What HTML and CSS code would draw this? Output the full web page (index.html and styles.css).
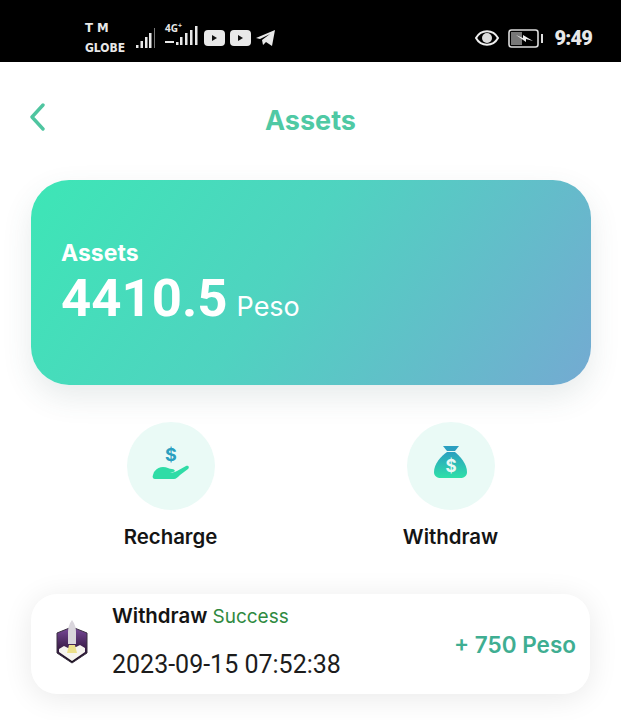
FILE: index.html
```html
<!DOCTYPE html>
<html lang="en">
<head>
  <meta charset="UTF-8">
  <meta name="viewport" content="width=device-width, initial-scale=1.0">
  <title>Assets</title>
  <link rel="stylesheet" href="styles.css">
</head>
<body>
  <div class="status-bar">
    <div class="status-left">
      <div class="carrier"><span class="carrier-top">T M</span><span>GLOBE</span></div>
      <svg class="signal-one" width="22" height="20" viewBox="0 0 22 20" fill="#e8e8e8">
        <rect x="0" y="17" width="2.5" height="3"/><rect x="4.5" y="13" width="2.5" height="7"/><rect x="9" y="9" width="2.5" height="11"/><rect x="13" y="5" width="2.5" height="15"/><rect x="18" y="0" width="1" height="20" fill="#777"/>
      </svg>
      <div class="signal-two">
        <span class="net">4G<sup>+</sup></span>
        <svg width="34" height="20" viewBox="0 0 34 20" fill="#e8e8e8">
          <rect x="0" y="15" width="9" height="2"/><rect x="11" y="16" width="2.5" height="3"/><rect x="15" y="11" width="2.5" height="8"/><rect x="20" y="7" width="2.5" height="12"/><rect x="25" y="4" width="2.5" height="15"/><rect x="30" y="0" width="2.5" height="19"/>
        </svg>
      </div>
      <svg class="yt" width="21" height="16" viewBox="0 0 21 16"><rect width="21" height="16" rx="4" fill="#e9e9e9"/><path d="M8 5l5 3-5 3z" fill="#111"/></svg>
      <svg class="yt" width="21" height="16" viewBox="0 0 21 16"><rect width="21" height="16" rx="4" fill="#e9e9e9"/><path d="M8 5l5 3-5 3z" fill="#111"/></svg>
      <svg class="plane" width="20" height="18" viewBox="0 0 20 18"><path d="M0 9L19 1l-3 16-6-4-3 3-1-5 8-6-10 5z" fill="#e9e9e9"/></svg>
    </div>
    <div class="status-right">
      <svg width="24" height="16" viewBox="0 0 24 16"><path d="M1 8c5-9 17-9 22 0-5 9-17 9-22 0z" fill="none" stroke="#eee" stroke-width="2"/><circle cx="12" cy="8" r="5" fill="#ddd"/></svg>
      <svg class="battery" width="37" height="19" viewBox="0 0 37 19"><rect x="1" y="1" width="29" height="17" rx="2.5" fill="none" stroke="#ddd" stroke-width="1.6"/><rect x="3" y="3" width="11" height="13" fill="#777"/><path d="M8 6l7 3 0-3 10 6-7-2 0 3z" fill="#eee"/><rect x="33" y="5" width="2" height="9" fill="#ddd"/></svg>
      <span class="clock">9:49</span>
    </div>
  </div>

  <div class="header">
    <svg class="back" width="18" height="28" viewBox="0 0 18 28"><path d="M15 2L4 14l11 12" fill="none" stroke="#4fc5a0" stroke-width="3.4" stroke-linecap="round" stroke-linejoin="round"/></svg>
    <div class="title">Assets</div>
  </div>

  <div class="assets-card">
    <div class="assets-label">Assets</div>
    <div class="assets-amount">4410.5 <span>Peso</span></div>
  </div>

  <div class="actions">
    <div class="action">
      <div class="action-icon">
        <svg width="44" height="44" viewBox="0 0 44 44">
          <text x="22" y="17" text-anchor="middle" class="dollar">$</text>
          <path d="M6 35c-2 0-3-2-2-4l1-3c3-4 6-5 9-5 4 0 6 2 9 2 3 0 4 3 1 3h-3c3 1 5 0 7-1l9-5c2-1 4 1 2 3l-8 6c-2 2-4 4-6 4z" fill="#2fdca6"/>
        </svg>
      </div>
      <div class="action-name">Recharge</div>
    </div>
    <div class="action">
      <div class="action-icon">
        <svg width="44" height="44" viewBox="0 0 44 44">
          <defs><linearGradient id="bag" x1="0" y1="0" x2="0" y2="1"><stop offset="0" stop-color="#2b9fc0"/><stop offset="1" stop-color="#2fe0a8"/></linearGradient></defs>
          <path d="M14 2h16l-4 5H18z" fill="#2b9fc0"/>
          <path d="M18 8h8c5 4 12 12 12 20 0 4-3 6-7 6H12c-4 0-7-2-7-6 0-8 7-16 13-20z" fill="url(#bag)"/>
          <text x="22" y="28" text-anchor="middle" class="dollar-white">$</text>
        </svg>
      </div>
      <div class="action-name">Withdraw</div>
    </div>
  </div>

  <div class="record">
    <svg class="badge" width="32" height="44" viewBox="0 0 32 44">
      <defs><linearGradient id="sky" x1="0" y1="0" x2="0" y2="1"><stop offset="0" stop-color="#7a4a9c"/><stop offset="0.6" stop-color="#3a1d48"/><stop offset="1" stop-color="#120a16"/></linearGradient></defs>
      <path d="M1 13L16 7l15 6v20L16 43 1 33z" fill="url(#sky)" stroke="#3a3040" stroke-width="1"/>
      <path d="M3 29l5-3 4 2 8-1 4-2 5 3v4L16 41 3 32z" fill="#f6f4ef"/>
      <path d="M16 0c3 4 4 8 4 12v12h-8V12c0-4 1-8 4-12z" fill="#d9d5dc"/>
      <path d="M13 25h6l2 8h-10z" fill="#ece08a"/>
    </svg>
    <div class="record-info">
      <div class="record-title">Withdraw <span>Success</span></div>
      <div class="record-time">2023-09-15 07:52:38</div>
    </div>
    <div class="record-amount">+ 750 Peso</div>
  </div>
</body>
</html>
```

FILE: styles.css
```css
body {
  margin: 0;
  padding: 0;
  height: 720px;
  overflow: hidden;
  background-color: #fff;
  font-family: "Open Sans", "Liberation Sans", sans-serif;
}

.status-bar {
  height: 62px;
  background-color: #000;
  color: #e8e8e8;
  display: flex;
  justify-content: space-between;
  align-items: center;
  padding: 14px 29px 0 85px;
  box-sizing: border-box;
}

.status-left, .status-right {
  display: flex;
  align-items: center;
}

.carrier {
  display: flex;
  flex-direction: column;
  width: 51px;
  font-family: "DejaVu Sans Condensed", "DejaVu Sans", sans-serif;
  font-stretch: condensed;
  font-size: 12px;
  line-height: 20px;
  font-weight: 700;
}

.carrier-top {
  font-size: 13px;
}

.signal-one {
  margin-right: 7px;
}

.signal-two {
  position: relative;
  width: 39px;
}

.net {
  position: absolute;
  left: 0;
  top: -3px;
  font-size: 10px;
  line-height: 10px;
  font-weight: 700;
}

.net sup {
  font-size: 7px;
  line-height: 0;
}

.yt {
  margin-right: 5px;
}

.status-right {
  gap: 9px;
}

.clock {
  font-family: Roboto, sans-serif;
  font-size: 20px;
  letter-spacing: -0.8px;
  font-weight: 900;
}

.header {
  position: relative;
  height: 118px;
  display: flex;
  justify-content: center;
  padding-top: 42px;
  box-sizing: border-box;
}

.back {
  position: absolute;
  left: 28px;
  top: 41px;
}

.title {
  font-family: Inter, sans-serif;
  font-size: 27px;
  line-height: 34px;
  font-weight: 700;
  color: #4fc9a4;
}

.assets-card {
  margin: 0 30px 0 31px;
  height: 205px;
  border-radius: 38px;
  background: linear-gradient(125deg, #3de6b6 0%, #4fd3c0 45%, #74aad2 100%);
  box-shadow: 0 12px 30px rgba(60, 90, 90, 0.12);
  color: #fff;
  padding: 58px 30px 0;
  box-sizing: border-box;
}

.assets-label {
  font-family: Inter, sans-serif;
  font-size: 23px;
  line-height: 30px;
  font-weight: 700;
}

.assets-amount {
  font-family: Roboto, sans-serif;
  font-size: 52.7px;
  line-height: 60px;
  font-weight: 700;
  word-spacing: -4px;
}

.assets-amount span {
  font-family: Inter, sans-serif;
  font-size: 27px;
  font-weight: 400;
}

.actions {
  display: grid;
  grid-template-columns: 280px 280px;
  justify-content: center;
  margin-top: 37px;
}

.action {
  display: flex;
  flex-direction: column;
  align-items: center;
}

.action-icon {
  width: 88px;
  height: 88px;
  border-radius: 50%;
  background-color: #eafaf6;
  display: flex;
  justify-content: center;
  align-items: center;
}

.dollar {
  font-family: Inter, sans-serif;
  font-size: 18px;
  font-weight: 700;
  fill: #2b9fc0;
}

.dollar-white {
  font-family: Inter, sans-serif;
  font-size: 17px;
  font-weight: 700;
  fill: #e9f9f5;
}

.action-name {
  margin-top: 14px;
  font-family: Inter, sans-serif;
  font-size: 20.4px;
  line-height: 26px;
  font-weight: 600;
  color: #141414;
}

.record {
  margin: 44px 31px 0;
  height: 100px;
  border-radius: 26px;
  background-color: #fff;
  box-shadow: 0 4px 30px rgba(0, 0, 0, 0.09);
  display: flex;
  align-items: center;
  padding: 0 14px 0 25px;
  box-sizing: border-box;
}

.badge {
  flex: none;
  margin-top: -4px;
}

.record-info {
  flex: 1;
  margin-left: 24px;
  padding-bottom: 7px;
}

.record-title {
  font-family: Inter, sans-serif;
  font-size: 20.4px;
  line-height: 26px;
  font-weight: 600;
  color: #141414;
}

.record-title span {
  font-size: 19px;
  font-weight: 400;
  color: #2f8a3f;
}

.record-time {
  margin-top: 21px;
  font-family: Roboto, sans-serif;
  font-size: 25px;
  line-height: 28px;
  color: #1c1c1c;
}

.record-amount {
  font-family: Inter, sans-serif;
  font-size: 22.5px;
  font-weight: 600;
  color: #3fae92;
}
```
